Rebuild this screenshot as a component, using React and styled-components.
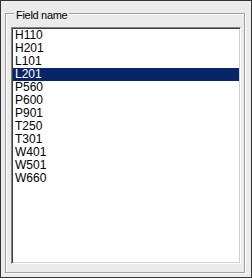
import styled, { createGlobalStyle } from "styled-components";

const Global = createGlobalStyle`
  body {
    margin: 0;
    background: #ebebeb;
  }
`;

const Window = styled.div`
  box-sizing: border-box;
  width: 252px;
  height: 278px;
  display: flex;
  background: #ebebeb;
  border: 1px solid #333;
  padding: 12px 6px 4px 4px;
  font-family: "Liberation Sans", Arial, sans-serif;
  font-size: 11px;
  color: #000;
`;

/* etched group box: grey line with a white line one pixel down/right */
const GroupBox = styled.div`
  position: relative;
  flex: 1;
  display: flex;
  border: 1px solid #a0a0a0;
  box-shadow: inset 1px 1px 0 #fff, 1px 1px 0 #fff;
  padding: 13px 3px 8px 5px;
`;

const Caption = styled.span`
  position: absolute;
  top: -5px;
  left: 8px;
  padding: 0 2px;
  line-height: 13px;
  letter-spacing: -0.3px;
  background: #ebebeb;
`;

const ListBox = styled.ul`
  flex: 1;
  margin: 0;
  padding: 1px;
  list-style: none;
  background: #fff;
  border: 1px solid;
  border-color: #808080 #fff #fff #808080;
  box-shadow: inset 1px 1px 0 #404040, inset -1px -1px 0 #d4d0c8;
`;

const Item = styled.li`
  height: 13px;
  line-height: 13px;
  font-size: 12px;
  padding-left: 2px;
  white-space: nowrap;
  background: ${(p) => (p.$selected ? "#0a246a" : "transparent")};
  color: ${(p) => (p.$selected ? "#fff" : "#000")};
`;

const fields = [
  "H110",
  "H201",
  "L101",
  "L201",
  "P560",
  "P600",
  "P901",
  "T250",
  "T301",
  "W401",
  "W501",
  "W660",
];

const App = () => {
  return (
    <>
      <Global />
      <Window>
        <GroupBox>
          <Caption>Field name</Caption>
          <ListBox>
            {fields.map((f) => (
              <Item key={f} $selected={f === "L201"}>
                {f}
              </Item>
            ))}
          </ListBox>
        </GroupBox>
      </Window>
    </>
  );
};

export default App;
